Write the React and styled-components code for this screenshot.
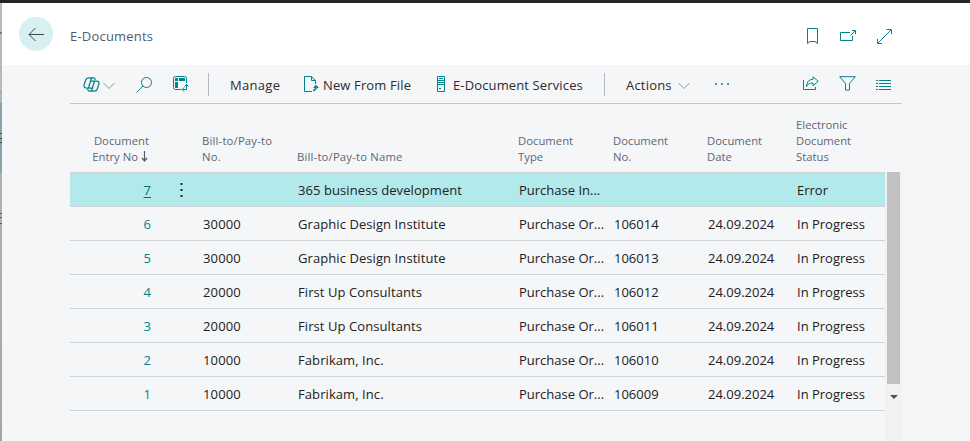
import React from 'react';
import styled, { createGlobalStyle } from 'styled-components';

const Global = createGlobalStyle`
  *{box-sizing:border-box}
  body{margin:0;background:#f5f6f8;overflow:hidden;font-family:"Open Sans","Noto Sans",sans-serif;color:#212121}
`;
const teal = '#00838a';

const Page = styled.div`height:441px;display:flex;flex-direction:column;background:#f5f6f8;`;
const TopBar = styled.div`height:3px;flex:none;background:#262626;`;
const Body = styled.div`flex:1;display:flex;min-height:0;`;
const Backdrop = styled.div`
  width:2px;flex:none;
  background:linear-gradient(
    #bababa 0 29px,#777 29px 31px,#b8b8b8 31px 89px,#999 89px 90px,#b4b4b4 90px 100px,
    #86a5aa 100px 130px,#405055 130px 131px,#86a5aa 131px 135px,#405055 135px 136px,#86a5aa 136px 139px,#405055 139px 140px,#86a5aa 140px 170px,
    #b1b1b1 170px 210px,#555 210px 211px,#b1b1b1 211px 214px,#555 214px 215px,#b1b1b1 215px 220px,#555 220px 221px,#afafaf 221px,#a6a6a6 100%
  );
`;
const Panel = styled.main`flex:1;min-width:0;`;
const Header = styled.header`height:62px;background:#fff;display:flex;align-items:center;padding:4px 78px 0 17px;`;
const Back = styled.button`
  width:34px;height:34px;border:0;border-radius:50%;padding:0;background:#d9f0f2;display:grid;place-items:center;
  margin:-4px 17px 0 0;
`;
const Text = styled.span`
  display:block;white-space:nowrap;font-size:13px;letter-spacing:${p => p.$ls || 0}px;
`;
const Title = styled(Text)`color:#505c6d;flex:1;`;
const Icon = styled.svg`
  display:block;flex:none;fill:none;stroke:${p => p.$color || teal};stroke-width:${p => p.$w || 1};
  margin-left:${p => p.$ml || 0}px;margin-top:${p => p.$mt || 0}px;
`;
const Toolbar = styled.nav`
  height:39px;width:832px;margin-left:68px;border-bottom:1px solid #c3c6cb;display:flex;align-items:center;color:#2b2d31;
`;
const Divider = styled.i`width:1px;height:23px;flex:none;margin-left:${p => p.$ml}px;background:#b3b8c1;`;
const Label = styled(Text)`margin-left:${p => p.$ml}px;width:${p => p.$width}px;flex:none;padding-top:2px;`;
const Tools = styled.div`margin-left:auto;padding-right:11px;display:flex;align-items:center;gap:20px;`;
const Table = styled.section`width:832px;margin-left:68px;`;
const columns = 'grid-template-columns:96px 30px 95px 221px 95px 94px 89px 95px;';
const Head = styled.div`
  display:grid;${columns}
  height:68px;align-items:end;padding-bottom:7px;color:#5c6675;
`;
const HeadCell = styled.div`
  grid-column:${p => p.$col};font-size:11.3px;line-height:16px;white-space:pre;padding-left:6px;letter-spacing:${p => p.$ls || 0}px;
`;
const SortHead = styled(HeadCell)`padding:0 17px 0 0;text-align:right;`;
const SortLine = styled.div`display:flex;align-items:center;justify-content:flex-end;`;
const Grid = styled.div`display:flex;height:269px;`;
const Rows = styled.div`width:815px;border-top:1px solid #cfd1d6;`;
const Row = styled.div`
  display:grid;${columns}height:34px;
  background:${p => p.$selected ? '#b2e9eb' : 'transparent'};
`;
const Cell = styled.div`
  display:flex;align-items:center;padding:0 0 0 7px;border-bottom:1px solid #cfd2d7;
`;
const EntryCell = styled(Cell)`justify-content:flex-end;padding-right:15px;`;
const Link = styled(Text)`text-decoration:${p => p.$on ? 'underline' : 'none'};text-underline-offset:2px;color:${p => p.$on ? '#006d75' : teal};`;
const MenuCell = styled(Cell)`padding:0 0 0 14px;`;
const Scroll = styled.div`width:17px;background:#f1f1f1;display:flex;flex-direction:column;align-items:flex-start;padding-left:2px;`;
const Thumb = styled.div`width:13px;height:212px;background:#c1c1c1;`;
const Arrow = styled.i`margin:11px 0 0 3px;border:4px solid transparent;border-top-color:#505050;border-bottom:0;`;

const data = [
  ['7', '', '365 business development', 'Purchase In...', '', '', 'Error'],
  ['6', '30000', 'Graphic Design Institute', 'Purchase Or...', '106014', '24.09.2024', 'In Progress'],
  ['5', '30000', 'Graphic Design Institute', 'Purchase Or...', '106013', '24.09.2024', 'In Progress'],
  ['4', '20000', 'First Up Consultants', 'Purchase Or...', '106012', '24.09.2024', 'In Progress'],
  ['3', '20000', 'First Up Consultants', 'Purchase Or...', '106011', '24.09.2024', 'In Progress'],
  ['2', '10000', 'Fabrikam, Inc.', 'Purchase Or...', '106010', '24.09.2024', 'In Progress'],
  ['1', '10000', 'Fabrikam, Inc.', 'Purchase Or...', '106009', '24.09.2024', 'In Progress'],
];
// Letter spacing for each text column after the entry number.
const spacing = [0.15, 0.08, 0, 0, 0, 0];

const Chevron = ({ ml }) => (
  <Icon $ml={ml} $mt={3} $color="#8d9299" width="12" height="8" viewBox="0 0 12 8"><path d="M.5 1 6 6.500 11.500 1" /></Icon>
);

export default function App() {
  return (
    <Page>
      <Global />
      <TopBar />
      <Body>
        <Backdrop />
        <Panel>
          <Header>
            <Back aria-label="Back"><Icon $color="#3c4a4c" width="16" height="15" viewBox="0 0 16 15"><path d="M16 7.500H1M7.500 1 1 7.500 7.500 14" /></Icon></Back>
            <Title $ls={0.2}>E-Documents</Title>
            <Icon width="11" height="17" viewBox="0 0 11 17"><path d="M.5.5h10v15L8 13.500H3L.5 15.500Z" /></Icon>
            <Icon $ml={22} $mt={-1} width="16" height="12" viewBox="0 0 16 12"><path d="M10 2.500H.5v8h12V6M10.500 5.500l4.500-4.500M12 .5h3.500V4" /></Icon>
            <Icon $ml={21} width="15" height="15" viewBox="0 0 15 15"><path d="M1 14 14 1M9.500.5h5V5M.5 10v4.500H5" /></Icon>
          </Header>
          <Toolbar>
            <Icon $ml={13} $w={1.25} width="17" height="15" viewBox="0 0 17 15">
              <path d="M5.500.8h5.200Q12 .8 12.400 3M5.500.8Q3.400.8 2.700 3L1.200 7.500Q.3 11 3.500 11H5M5.500 11 8 2.500Q8.500.8 10 .8M11.500 14.200H6.300Q5 14.200 4.600 12M11.500 14.200q2.100 0 2.800-2.200l1.500-4.500Q16.700 4 13.500 4H12M11.500 4 9 12.500Q8.500 14.200 7 14.200M7.600 4H12M5 11h4.400" />
            </Icon>
            <Chevron ml={3} />
            <Icon $ml={21} $mt={1} width="16" height="16" viewBox="0 0 16 16"><circle cx="10.500" cy="5.500" r="5" /><path d="M7 9 .5 15.500" /></Icon>
            <Icon $ml={21} width="16" height="16" viewBox="0 0 16 16">
              <path d="M8 13.500H2.500Q.5 13.500.5 11.500V2.500Q.5.5 2.500.5h9q2 0 2 2V7" />
              <path fill={teal} stroke="none" d="M2 2h3v3H2ZM6 2h6v3H6ZM2 6h3v6H2Z" />
              <path d="M13.500 8.500v5H9.500M11.500 10.500l2-2 2 2M11 11.500l-2 2 2 2" />
            </Icon>
            <Divider $ml={19} />
            <Label $ml={21} $width={74} $ls={0.3}>Manage</Label>
            <Icon width="15" height="17" viewBox="0 0 15 17">
              <path d="M8 15.500H.5V.5h7l4 4V8M7.500.5v4h4" />
              <path strokeWidth="1.500" d="M9 14.500q3 0 3-4M9.800 12 12 9.800l2.200 2.200" />
            </Icon>
            <Label $ml={4} $width={114} $ls={0.13}>New From File</Label>
            <Icon width="8" height="16" viewBox="0 0 8 16"><path d="M.5.500h7v15h-7ZM2 2.500h4M1 4.500h7M1 6.500h7M1 8.500h7M2 12.500h2" /></Icon>
            <Label $ml={8} $width={151} $ls={0.13}>E-Document Services</Label>
            <Divider $ml={0} />
            <Label $ml={21} $width={51} $ls={0.2}>Actions</Label>
            <Chevron ml={1} />
            <Icon $ml={25} $mt={-1} width="16" height="2" viewBox="0 0 16 2"><path fill={teal} fillOpacity=".75" stroke="none" d="M0 0h2v2H0ZM6 0h2v2H6ZM12 0h2v2h-2Z" /></Icon>
            <Tools>
              <Icon $mt={-2} width="17" height="15" viewBox="0 0 17 15">
                <path d="M1.500 4v9.500h12V11M11 .8 16.200 5.300 11 9.700V7.200Q6.500 6.500 4.500 10.500 4.800 3.400 11 3.300Z" />
              </Icon>
              <Icon $mt={-1} width="17" height="15" viewBox="0 0 17 15"><path d="M.7.700h15.600L10.500 7.500v6.500h-4V7.500Z" /></Icon>
              <Icon $mt={2} width="15" height="11" viewBox="0 0 15 11"><path d="M0 .5h2M3 .5h12M0 3.500h2M3 3.500h12M0 6.500h2M3 6.500h12M0 9.500h2M3 9.500h12" /></Icon>
            </Tools>
          </Toolbar>
          <Table>
            <Head>
              <SortHead $col={1}>
                Document
                <SortLine>
                  Entry No
                  <Icon $ml={3} $mt={-2} $w={1.2} $color="#505c6d" width="8" height="11" viewBox="0 0 8 11"><path d="M3.500 0v10M1 7l2.500 3L6 7" /></Icon>
                </SortLine>
              </SortHead>
              <HeadCell $col={3} $ls={0.18}>{'Bill-to/Pay-to\nNo.'}</HeadCell>
              <HeadCell $col={4} $ls={0.18}>Bill-to/Pay-to Name</HeadCell>
              <HeadCell $col={5}>{'Document\nType'}</HeadCell>
              <HeadCell $col={6}>{'Document\nNo.'}</HeadCell>
              <HeadCell $col={7}>{'Document\nDate'}</HeadCell>
              <HeadCell $col={8}>{'Electronic\nDocument\nStatus'}</HeadCell>
            </Head>
            <Grid>
              <Rows>
                {data.map((r, i) => (
                  <Row key={r[0]} $selected={i === 0}>
                    <EntryCell><Link $on={i === 0}>{r[0]}</Link></EntryCell>
                    <MenuCell>
                      {i === 0 && <Icon width="3" height="14" viewBox="0 0 3 14"><path fill="#222" stroke="none" d="M.5 0h2v2h-2ZM.5 6h2v2h-2ZM.5 12h2v2h-2Z" /></Icon>}
                    </MenuCell>
                    {r.slice(1).map((t, j) => <Cell key={j}><Text $ls={spacing[j]}>{t}</Text></Cell>)}
                  </Row>
                ))}
              </Rows>
              <Scroll><Thumb /><Arrow /></Scroll>
            </Grid>
          </Table>
        </Panel>
      </Body>
    </Page>
  );
}
